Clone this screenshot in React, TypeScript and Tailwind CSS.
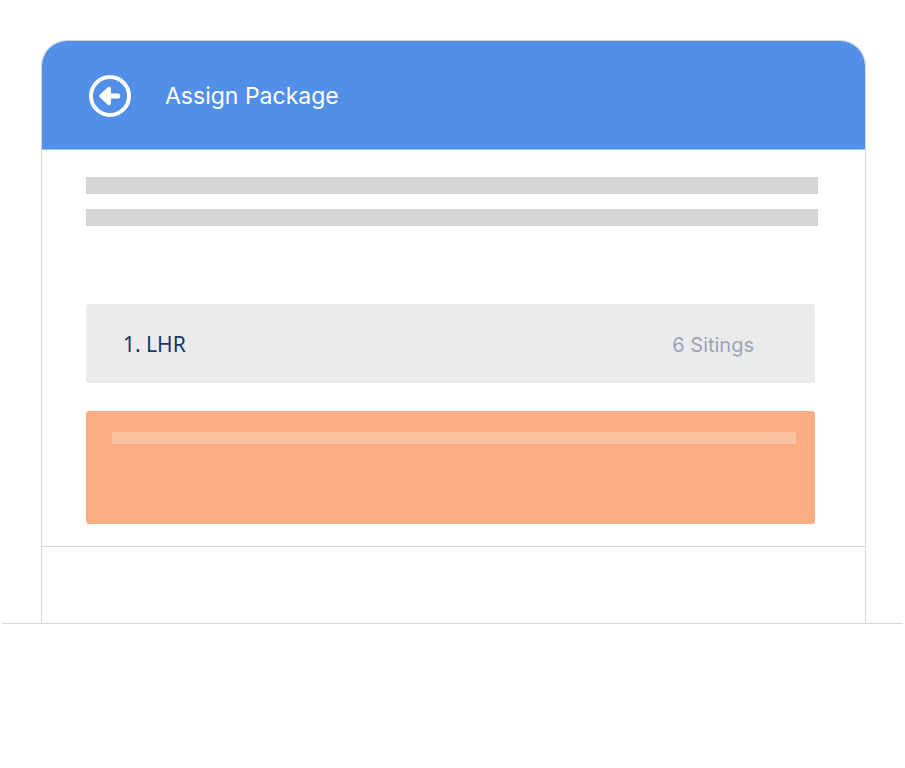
function BackIcon() {
  return (
    <svg viewBox="0 0 42 42" className="h-[42px] w-[42px]" aria-hidden="true">
      <circle
        cx="21"
        cy="21"
        r="19"
        fill="none"
        stroke="currentColor"
        strokeWidth="4"
      />
      <path
        d="M10.4 20.1 18.6 12.5Q20 11.200 21.300 12.200Q22 12.800 22 14V18.400H29.400Q31.200 18.400 31.200 20.200V21.800Q31.200 23.600 29.400 23.600H22V28Q22 29.200 21.300 29.800Q20 30.800 18.600 29.500L10.400 21.900Q9.600 21 10.400 20.100Z"
        fill="currentColor"
      />
    </svg>
  );
}

export default function AssignPackagePage() {
  return (
    <main className="min-h-screen bg-white px-0.5 pt-10 font-['Inter',sans-serif]">
      <div className="border-b border-[#d8d8d8] pr-[37px] pl-[39px]">
        <section className="overflow-hidden rounded-t-[26px] border border-b-0 border-[#d8d8d8]">
          {/* Header */}
          <header className="flex h-[109px] items-center gap-[34px] border-b border-[#a5c0e8] bg-[#528fe8] pt-0.5 pl-[47px] text-white">
            <button type="button" aria-label="Back">
              <BackIcon />
            </button>

            <h1 className="text-[23px]">Assign Package</h1>
          </header>

          {/* Package details */}
          <div className="border-b border-[#d8d8d8] pt-[27px] pr-[50px] pb-[22px] pl-11">
            <div className="-mr-[3px] space-y-[15px]">
              <div className="h-[17px] bg-[#d6d6d6]"></div>
              <div className="h-[17px] bg-[#d6d6d6]"></div>
            </div>

            <div className="mt-[78px] flex h-[79px] items-center justify-between rounded-[3px] bg-[#ebebeb] pt-0.5 pr-[61px] pl-[37px]">
              <span className="font-['Noto_Sans',sans-serif] text-[21px] text-[#15356e]">
                1. LHR
              </span>
              <span className="text-[20px] text-[#9aa3b8]">6 Sitings</span>
            </div>

            <div className="mt-7 h-[113px] rounded-[3px] bg-[#faad82] pt-[21px] pr-[19px] pl-[26px]">
              <div className="h-3 bg-[#fbc1a0]"></div>
            </div>
          </div>

          {/* Footer */}
          <footer className="h-[76px]"></footer>
        </section>
      </div>
    </main>
  );
}
